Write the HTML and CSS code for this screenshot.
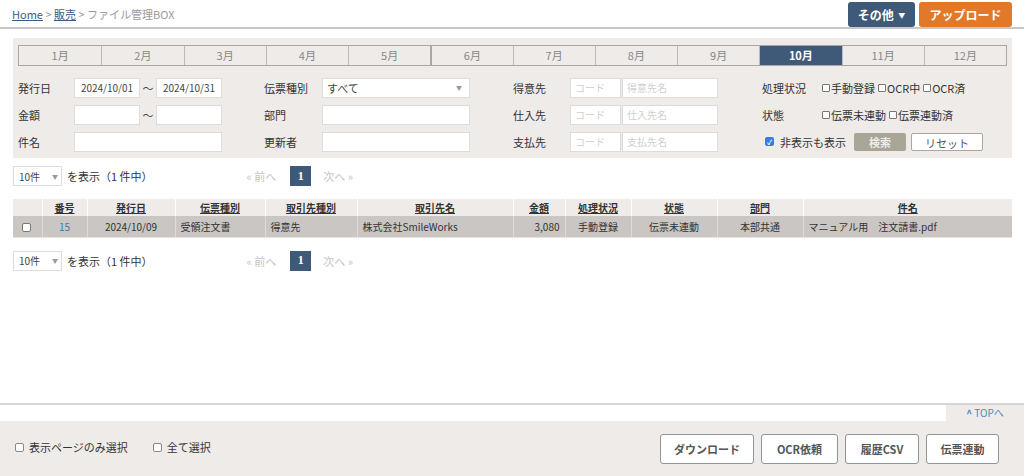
FILE: index.html
```html
<!DOCTYPE html>
<html lang="ja">
<head>
  <meta charset="UTF-8" />
  <title>ファイル管理BOX</title>
  <link rel="stylesheet" href="styles.css">
</head>
<body>
  <div class="topbar">
    <div class="crumb">
      <a href="#">Home</a> &gt; <a href="#">販売</a> &gt; ファイル管理BOX
    </div>
    <div class="top-btns">
      <button class="btn-other">その他 <span class="caret">▼</span></button>
      <button class="btn-upload">アップロード</button>
    </div>
  </div>

  <div class="main">
    <div class="search">
      <div class="months">
        <div>1月</div><div>2月</div><div>3月</div><div>4月</div><div>5月</div><div>6月</div>
        <div>7月</div><div>8月</div><div>9月</div><div class="on">10月</div><div>11月</div><div>12月</div>
      </div>

      <div class="form">
        <label>発行日</label>
        <div class="field">
          <input class="w66" value="2024/10/01"><span class="tilde">～</span><input class="w66" value="2024/10/31">
        </div>
        <label>伝票種別</label>
        <div class="field"><div class="select">すべて<span class="arr">▼</span></div></div>
        <label>得意先</label>
        <div class="field"><input class="code" placeholder="コード"><input class="name" placeholder="得意先名"></div>
        <label>処理状況</label>
        <div class="field checks">
          <span><i class="box"></i>手動登録</span><span><i class="box"></i>OCR中</span><span><i class="box"></i>OCR済</span>
        </div>

        <label>金額</label>
        <div class="field">
          <input class="w66"><span class="tilde">～</span><input class="w66">
        </div>
        <label>部門</label>
        <div class="field"><input class="w148"></div>
        <label>仕入先</label>
        <div class="field"><input class="code" placeholder="コード"><input class="name" placeholder="仕入先名"></div>
        <label>状態</label>
        <div class="field checks">
          <span><i class="box"></i>伝票未連動</span><span><i class="box"></i>伝票連動済</span>
        </div>

        <label>件名</label>
        <div class="field"><input class="w148"></div>
        <label>更新者</label>
        <div class="field"><input class="w148"></div>
        <label>支払先</label>
        <div class="field"><input class="code" placeholder="コード"><input class="name" placeholder="支払先名"></div>
        <div class="field last">
          <span class="hidden-opt"><i class="tick">✓</i>非表示も表示</span>
          <button class="btn-search">検索</button>
          <button class="btn-reset">リセット</button>
        </div>
      </div>
    </div>

    <div class="pager">
      <div class="per">10件<span class="arr">▼</span></div>
      <span class="count">を表示（1 件中）</span>
      <div class="pages">
        <span class="dim">« 前へ</span><span class="cur">1</span><span class="dim">次へ »</span>
      </div>
    </div>

    <table class="list">
      <colgroup>
        <col style="width:29px"><col style="width:45px"><col style="width:88px"><col style="width:90px">
        <col style="width:92px"><col style="width:156px"><col style="width:52px"><col style="width:66px">
        <col style="width:86px"><col style="width:86px"><col style="width:209px">
      </colgroup>
      <thead>
        <tr>
          <th></th><th><a href="#">番号</a></th><th><a href="#">発行日</a></th><th><a href="#">伝票種別</a></th>
          <th><a href="#">取引先種別</a></th><th><a href="#">取引先名</a></th><th><a href="#">金額</a></th>
          <th><a href="#">処理状況</a></th><th><a href="#">状態</a></th><th><a href="#">部門</a></th><th><a href="#">件名</a></th>
        </tr>
      </thead>
      <tbody>
        <tr>
          <td class="c"><i class="box row-box"></i></td>
          <td class="c"><a class="num" href="#">15</a></td>
          <td class="c">2024/10/09</td>
          <td>受領注文書</td>
          <td>得意先</td>
          <td>株式会社SmileWorks</td>
          <td class="r">3,080</td>
          <td class="c">手動登録</td>
          <td class="c">伝票未連動</td>
          <td class="c">本部共通</td>
          <td>マニュアル用　注文請書.pdf</td>
        </tr>
      </tbody>
    </table>

    <div class="pager second">
      <div class="per">10件<span class="arr">▼</span></div>
      <span class="count">を表示（1 件中）</span>
      <div class="pages">
        <span class="dim">« 前へ</span><span class="cur">1</span><span class="dim">次へ »</span>
      </div>
    </div>
  </div>

  <div class="toprow">
    <a class="totop" href="#"><span class="up">^</span> TOPへ</a>
  </div>
  <div class="footer">
    <div class="sel">
      <span><i class="box"></i>表示ページのみ選択</span>
      <span><i class="box"></i>全て選択</span>
    </div>
    <div class="actions">
      <button class="w94">ダウンロード</button>
      <button class="w77">OCR依頼</button>
      <button class="w74">履歴CSV</button>
      <button class="w73">伝票連動</button>
    </div>
  </div>
</body>
</html>
```

FILE: styles.css
```css
:root {
  --panel: #eeebe9;
  --navy: #3f5a78;
  --orange: #e07a2a;
  --text: #444;
  --line: #c9c6c4;
}

* {
  box-sizing: border-box;
}

body {
  margin: 0;
  width: 1024px;
  height: 476px;
  overflow: hidden;
  display: flex;
  flex-direction: column;
  font-family: "Noto Sans CJK JP", "Noto Sans", sans-serif;
  font-size: 11px;
  color: var(--text);
  background: #fff;
}

button {
  font-family: inherit;
  cursor: pointer;
}

/* header */
.topbar {
  height: 29px;
  border-bottom: 2px solid #c8c8c8;
  display: flex;
  justify-content: space-between;
  padding: 0 12px 0 12px;
}

.crumb {
  padding-top: 6px;
  color: #9a9a9a;
  font-size: 11px;
}

.crumb a {
  color: #3d5a7c;
}

.top-btns {
  display: flex;
  gap: 4px;
  padding-top: 2px;
}

.top-btns button {
  height: 25px;
  border: none;
  border-radius: 3px;
  color: #fff;
  font-weight: bold;
  font-size: 12px;
}

.btn-other {
  width: 67px;
  background: var(--navy);
}

.caret {
  font-size: 7px;
  margin-left: 2px;
  vertical-align: 2px;
}

.btn-upload {
  width: 93px;
  background: var(--orange);
}

/* search panel */
.main {
  flex: 1;
  padding: 0 12px 0 13px;
}

.search {
  margin-top: 9px;
  height: 120px;
  background: var(--panel);
  padding: 7px 5px 0 5px;
}

.months {
  display: grid;
  grid-template-columns: repeat(12, 1fr);
  border: 1px solid #a9a6a4;
  height: 21px;
}

.months div {
  text-align: center;
  line-height: 19px;
  color: #888;
  border-left: 1px solid #bdbab8;
}

.months div:first-child {
  border-left: none;
}

.months div:nth-child(6) {
  border-left: 2px solid #a9a6a4;
}

.months .on {
  background: var(--navy);
  color: #fff;
  font-weight: bold;
}

.form {
  display: grid;
  grid-template-columns: 56px 190px 58px 191px 57px 192px 60px 1fr;
  grid-auto-rows: 27px;
  margin-top: 8px;
  align-items: center;
}

.form label {
  color: #333;
}

.field {
  display: flex;
  align-items: center;
}

.form input,
.select {
  height: 20px;
  border: 1px solid #dcdcdc;
  background: #fff;
  font-family: inherit;
  font-size: 10px;
  color: #444;
  padding: 0 4px;
  outline: none;
}

.form input::placeholder {
  color: #cfcfcf;
}

.w66 {
  width: 66px;
  text-align: center;
}

.w148 {
  width: 148px;
}

.tilde {
  width: 16px;
  text-align: center;
}

.select {
  width: 148px;
  display: flex;
  align-items: center;
  justify-content: space-between;
  font-size: 11px;
}

.arr {
  color: #999;
  font-size: 6px;
  margin-right: 3px;
}

.code {
  width: 51px;
  border-right: 1px solid #e8e8e8;
}

.name {
  width: 96px;
  margin-left: 1px;
}

.checks span {
  display: inline-flex;
  align-items: center;
  margin-right: 3px;
  color: #333;
}

.box {
  display: inline-block;
  width: 8px;
  height: 8px;
  border: 1px solid #777;
  background: #fff;
  border-radius: 1px;
  margin-right: 1px;
}

.last {
  grid-column: 7 / 9;
  padding-left: 3px;
}

.hidden-opt {
  display: inline-flex;
  align-items: center;
  color: #333;
}

.tick {
  display: inline-flex;
  align-items: center;
  justify-content: center;
  width: 9px;
  height: 9px;
  background: #2f7fe0;
  border-radius: 2px;
  color: #fff;
  font-size: 7px;
  font-style: normal;
  font-weight: bold;
  margin-right: 6px;
}

.btn-search {
  margin-left: 8px;
  width: 52px;
  height: 18px;
  background: #a9a597;
  border: none;
  border-radius: 2px;
  color: #eee;
  font-weight: bold;
  font-size: 11px;
}

.btn-reset {
  margin-left: 5px;
  width: 72px;
  height: 18px;
  background: #fff;
  border: 1px solid #a9a6a4;
  border-radius: 2px;
  color: #555;
  font-size: 11px;
}

/* pager */
.pager {
  display: flex;
  align-items: center;
  margin-top: 8px;
  height: 20px;
}

.pager.second {
  margin-top: 13px;
}

.per {
  width: 49px;
  height: 20px;
  border: 1px solid #dcdcdc;
  background: #fff;
  display: flex;
  align-items: center;
  justify-content: space-between;
  padding-left: 5px;
  font-size: 10px;
}

.count {
  margin-left: 5px;
  color: #333;
}

.pages {
  margin-left: 94px;
  display: flex;
  align-items: center;
  gap: 12px;
}

.dim {
  color: #c4c4c4;
}

.dim:first-child {
  margin-right: 2px;
}

.cur {
  width: 21px;
  height: 20px;
  background: var(--navy);
  color: #fff;
  font-family: "Liberation Serif", serif;
  font-weight: bold;
  font-size: 12px;
  display: flex;
  align-items: center;
  justify-content: center;
}

/* table */
.list {
  margin-top: 13px;
  width: 999px;
  border-collapse: collapse;
  table-layout: fixed;
  font-size: 10px;
}

.list th {
  height: 17px;
  background: var(--panel);
  border-left: 1px solid #fff;
  font-weight: bold;
  padding: 0;
}

.list th:first-child {
  border-left: none;
}

.list th a {
  color: #333;
}

.list td {
  height: 21px;
  background: var(--line);
  border-left: 1px solid #dedbd9;
  border-bottom: 1px solid #e6e3e1;
  padding: 0 5px;
  color: #333;
  white-space: nowrap;
}

.list td:first-child {
  border-left: none;
}

.list .c {
  text-align: center;
}

.list .r {
  text-align: right;
}

.row-box {
  width: 9px;
  height: 9px;
  border-radius: 2px;
  vertical-align: -1px;
}

.num {
  color: #3a78ba;
  text-decoration: none;
}

/* footer */
.toprow {
  border-top: 2px solid #d6d6d6;
  display: flex;
  justify-content: flex-end;
}

.totop {
  width: 78px;
  height: 16px;
  background: var(--panel);
  color: #4a88c8;
  text-decoration: none;
  text-align: center;
  line-height: 16px;
  font-size: 10px;
}

.up {
  font-weight: bold;
}

.footer {
  height: 55px;
  background: var(--panel);
  display: flex;
  align-items: center;
  justify-content: space-between;
  padding: 0 25px 0 15px;
}

.sel {
  display: flex;
  gap: 25px;
  color: #333;
  margin-top: -3px;
}

.sel span {
  display: inline-flex;
  align-items: center;
}

.sel .box {
  width: 9px;
  height: 9px;
  border-color: #888;
  border-radius: 2px;
  margin-right: 5px;
}

.actions {
  display: flex;
  gap: 7px;
}

.actions button {
  height: 30px;
  background: #fff;
  border: 1px solid #8e969c;
  border-radius: 3px;
  color: #555;
  font-weight: bold;
  font-size: 11px;
}

.w94 { width: 94px; }
.w77 { width: 77px; }
.w74 { width: 74px; }
.w73 { width: 73px; }
```
